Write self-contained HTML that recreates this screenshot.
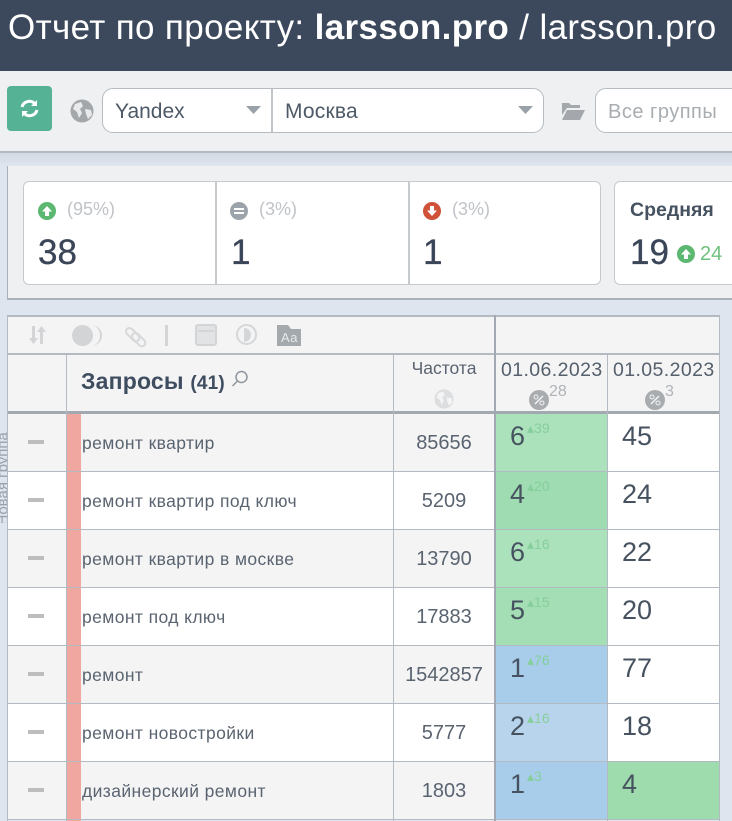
<!DOCTYPE html>
<html lang="ru"><head><meta charset="utf-8"><style>
html,body{margin:0;padding:0}
body{width:732px;height:821px;position:relative;overflow:hidden;background:#dfe5ef;font-family:"Liberation Sans","Noto Sans CJK SC",sans-serif;color:#3d4a5c}
div,span.a,svg{position:absolute}
.t{white-space:nowrap;line-height:1}
.b{background:#b3bac1}
.q{font-size:17.5px;color:#5a6470;left:82px;letter-spacing:.4px}
.f{font-size:20px;color:#5a6470;left:394px;width:100px;text-align:center}
.n{font-size:27px;color:#46525f}
.s{font-size:14px;color:#86cf9c}
.m{left:28px;width:16px;height:4px;background:#bdbdbd}
.big{-webkit-text-stroke:.35px #3a4658}
</style></head><body>
<div style="left:0;top:0;width:732px;height:71px;background:#3c495c"></div>
<div class="t" style="left:8px;top:10px;font-size:35px;color:#fff;letter-spacing:.36px">Отчет по проекту: <b>larsson.pro</b> / larsson.pro</div>

<div style="left:0;top:71px;width:732px;height:80px;background:#eef0f2;border-bottom:2px solid #b4bac2"></div>
<div style="left:7px;top:86px;width:45px;height:45px;border-radius:4px;background:#56b294"></div>
<svg style="left:19px;top:98px" width="21" height="21" viewBox="0 0 21 21" fill="none" stroke="#fff" stroke-width="3"><path d="M3 9a7.500 7.500 0 0 1 13-3"/><path d="M18 12a7.500 7.500 0 0 1-13 3"/><path d="M18 2v6h-6z" fill="#fff" stroke="none"/><path d="M3 19v-6h6z" fill="#fff" stroke="none"/></svg>
<svg style="left:70px;top:99px" width="24" height="24" viewBox="0 0 24 24"><circle cx="12" cy="12" r="11.500" fill="#a3a7aa"/><path d="M5 5l6-2 2 4-3 3 2 4-3 5-2-6-4-3zM15 10l6 1 1 5-4 4-2-5z" fill="#e8eaec"/></svg>
<div style="left:102px;top:88px;width:440px;height:43px;background:#fff;border:1.500px solid #b6bcc2;border-radius:11px"></div>
<div style="left:271px;top:89px;width:2px;height:43px;background:#c0c5ca"></div>
<div class="t" style="left:115px;top:101px;font-size:21px;color:#4d5966">Yandex</div>
<div class="t" style="left:285px;top:101px;font-size:21px;color:#4d5966;letter-spacing:.2px">Москва</div>
<svg style="left:246px;top:106px" width="15" height="9"><path d="M0 0h15l-7.500 8z" fill="#9aa1a8"/></svg>
<svg style="left:518px;top:106px" width="15" height="9"><path d="M0 0h15l-7.500 8z" fill="#9aa1a8"/></svg>
<svg style="left:561px;top:101px" width="25" height="20" viewBox="0 0 25 20"><path d="M1 2h7l2 2h9v3H6L1 14zM1 19l5-10h18l-5 10z" fill="#a4a8ac"/></svg>
<div style="left:595px;top:88px;width:160px;height:43px;background:#fff;border:1.500px solid #b6bcc2;border-radius:11px"></div>
<div class="t" style="left:608px;top:102px;font-size:20px;color:#a8adb2;letter-spacing:.5px">Все группы</div>

<div style="left:0;top:153px;width:732px;height:13px;background:linear-gradient(#d3dae5,#dfe5ef)"></div>
<div style="left:7px;top:166px;width:725px;background:#eef0f2;border-left:1.500px solid #a9b0ba;border-bottom:2px solid #aab1bb;box-sizing:border-box;height:134px"></div>
<div style="left:23px;top:181px;width:576px;height:102px;background:#fff;border:1.500px solid #c6cacd;border-radius:6px"></div>
<div style="left:215px;top:181px;width:1.500px;height:104px;background:#c6cacd"></div>
<div style="left:408px;top:181px;width:1.500px;height:104px;background:#c6cacd"></div>
<div style="left:614px;top:181px;width:140px;height:102px;background:#fff;border:1.500px solid #c6cacd;border-radius:6px"></div>

<svg style="left:38px;top:202px" width="18" height="18" viewBox="0 0 18 18"><circle cx="9" cy="9" r="9" fill="#5cb870"/><path d="M9 4l5 5.500h-3V14H7V9.500H4z" fill="#fff"/></svg>
<div class="t" style="left:67px;top:200px;font-size:18px;color:#c0c3c7">(95%)</div>
<div class="t big" style="left:38px;top:235px;font-size:35px;color:#3a4658">38</div>
<svg style="left:230px;top:202px" width="18" height="18" viewBox="0 0 18 18"><circle cx="9" cy="9" r="9" fill="#9da3aa"/><path d="M4 6h10v2H4zM4 10h10v2H4z" fill="#fff"/></svg>
<div class="t" style="left:259px;top:200px;font-size:18px;color:#c0c3c7">(3%)</div>
<div class="t big" style="left:231px;top:235px;font-size:35px;color:#3a4658">1</div>
<svg style="left:423px;top:202px" width="18" height="18" viewBox="0 0 18 18"><circle cx="9" cy="9" r="9" fill="#cf5239"/><path d="M9 14L4 8.500h3V4h4v4.500h3z" fill="#fff"/></svg>
<div class="t" style="left:452px;top:200px;font-size:18px;color:#c0c3c7">(3%)</div>
<div class="t big" style="left:423px;top:235px;font-size:35px;color:#3a4658">1</div>
<div class="t" style="left:630px;top:201px;font-size:19.500px;font-weight:bold;color:#46525f">Средняя</div>
<div class="t big" style="left:630px;top:235px;font-size:35px;color:#3a4658">19</div>
<svg style="left:677px;top:245px" width="18" height="18" viewBox="0 0 18 18"><circle cx="9" cy="9" r="9" fill="#5cb870"/><path d="M9 4l5 5.500h-3V14H7V9.500H4z" fill="#fff"/></svg>
<div class="t" style="left:700px;top:244px;font-size:20px;color:#6fc07f">24</div>

<div style="left:8px;top:316px;width:711px;height:503px;background:#f4f4f5"></div>
<div style="left:8px;top:471px;width:711px;height:58px;background:#fff"></div>
<div style="left:8px;top:587px;width:711px;height:58px;background:#fff"></div>
<div style="left:8px;top:703px;width:711px;height:58px;background:#fff"></div>
<div style="left:607px;top:413px;width:112px;height:348px;background:#fff"></div>
<div style="left:494px;top:413px;width:113px;height:58px;background:#abe2bb"></div>
<div style="left:494px;top:471px;width:113px;height:58px;background:#9fdcb1"></div>
<div style="left:494px;top:529px;width:113px;height:58px;background:#abe2bb"></div>
<div style="left:494px;top:587px;width:113px;height:58px;background:#a3deb4"></div>
<div style="left:494px;top:645px;width:113px;height:58px;background:#a7cdea"></div>
<div style="left:494px;top:703px;width:113px;height:58px;background:#b8d4ec"></div>
<div style="left:494px;top:761px;width:113px;height:58px;background:#a7cdea"></div>
<div style="left:607px;top:761px;width:112px;height:58px;background:#9fdcad"></div>
<div style="left:66px;top:413px;width:15px;height:408px;background:#f0a7a0"></div>

<div class="b" style="left:8px;top:315px;width:711px;height:1.500px"></div>
<div class="b" style="left:8px;top:353px;width:711px;height:1.500px"></div>
<div style="left:8px;top:411px;width:711px;height:2.500px;background:#a2a9b1"></div>
<div class="b" style="left:8px;top:471px;width:711px;height:1px"></div>
<div class="b" style="left:8px;top:529px;width:711px;height:1px"></div>
<div class="b" style="left:8px;top:587px;width:711px;height:1px"></div>
<div class="b" style="left:8px;top:645px;width:711px;height:1px"></div>
<div class="b" style="left:8px;top:703px;width:711px;height:1px"></div>
<div class="b" style="left:8px;top:761px;width:711px;height:1px"></div>
<div class="b" style="left:8px;top:819px;width:711px;height:1px"></div>
<div class="b" style="left:7px;top:315px;width:1px;height:506px"></div>
<div class="b" style="left:66px;top:354px;width:1px;height:467px"></div>
<div class="b" style="left:393px;top:354px;width:1px;height:467px"></div>
<div style="left:494px;top:315px;width:2px;height:506px;background:#a2a9b2"></div>
<div class="b" style="left:607px;top:354px;width:1px;height:467px"></div>
<div class="b" style="left:719px;top:315px;width:1px;height:506px"></div>

<svg style="left:27px;top:325px" width="22" height="20" viewBox="0 0 22 20" fill="#d2d4d6"><path d="M5 1h3v12h3l-4.500 6L2 13h3zM13 19h3V7h3l-4.500-6L10 7h3z"/></svg>
<div style="left:72px;top:325px;width:21px;height:21px;border-radius:50%;background:#d2d4d6"></div>
<svg style="left:90px;top:325px" width="12" height="21"><path d="M1 0a11 10.500 0 0 1 0 21a9 10.500 0 0 0 0-21z" fill="#d2d4d6"/></svg>
<svg style="left:122px;top:323px" width="26" height="25" viewBox="0 0 26 25" fill="none" stroke="#d6d8da" stroke-width="2"><rect x="0" y="-3.500" width="16" height="7" rx="3.500" transform="translate(5 6) rotate(45)"/><rect x="0" y="-3.500" width="16" height="7" rx="3.500" transform="translate(11 11) rotate(45)"/></svg>
<div style="left:165px;top:325px;width:3px;height:21px;background:#d2d4d6"></div>
<div style="left:195px;top:324px;width:18px;height:18px;border:2.500px solid #d2d4d6;border-radius:3px;background:#e2e3e5"></div>
<div style="left:198px;top:330px;width:16px;height:2px;background:#d2d4d6"></div>
<div style="left:236px;top:324px;width:17px;height:17px;border:2.500px solid #d4d6d8;border-radius:50%"></div>
<div style="left:244px;top:328px;width:7px;height:14px;border-radius:0 7px 7px 0;background:#d4d6d8"></div>
<svg style="left:277px;top:325px" width="24" height="21"><path d="M0 0h11l3 4h10v17H0z" fill="#a3a9ac"/></svg>
<div class="t" style="left:281px;top:331px;font-size:13px;color:#e8eaeb;letter-spacing:.6px">Aa</div>

<div class="t" style="left:81px;top:370px;font-size:23px;font-weight:bold;color:#3f4d60;letter-spacing:.2px">Запросы <span style="font-size:19px">(41)</span></div>
<svg style="left:231px;top:370px" width="18" height="18" viewBox="0 0 18 18" fill="none" stroke="#8e959c" stroke-width="1.500"><circle cx="10.500" cy="7" r="5.500"/><path d="M6.500 11L1.500 16"/></svg>
<div class="t" style="left:394px;top:360px;width:100px;text-align:center;font-size:17.500px;color:#5a6470">Частота</div>
<svg style="left:434px;top:389px" width="20" height="20" viewBox="0 0 24 24"><circle cx="12" cy="12" r="11.500" fill="#dcdedf"/><path d="M5 5l6-2 2 4-3 3 2 4-3 5-2-6-4-3zM15 10l6 1 1 5-4 4-2-5z" fill="#f4f4f5"/></svg>
<div class="t" style="left:501px;top:361px;font-size:19.500px;color:#55606c;letter-spacing:.4px">01.06.2023</div>
<div class="t" style="left:613px;top:361px;font-size:19.500px;color:#55606c;letter-spacing:.4px">01.05.2023</div>
<svg style="left:529px;top:390px" width="20" height="20"><circle cx="10" cy="10" r="10" fill="#a9acaf"/><path d="M6 14l8-8" stroke="#f4f4f5" stroke-width="1.500"/><circle cx="7" cy="7" r="2" fill="none" stroke="#f4f4f5"/><circle cx="13" cy="13" r="2" fill="none" stroke="#f4f4f5"/></svg>
<div class="t" style="left:549px;top:384px;font-size:16px;color:#b0b3b7">28</div>
<svg style="left:645px;top:390px" width="20" height="20"><circle cx="10" cy="10" r="10" fill="#a9acaf"/><path d="M6 14l8-8" stroke="#f4f4f5" stroke-width="1.500"/><circle cx="7" cy="7" r="2" fill="none" stroke="#f4f4f5"/><circle cx="13" cy="13" r="2" fill="none" stroke="#f4f4f5"/></svg>
<div class="t" style="left:665px;top:384px;font-size:16px;color:#b0b3b7">3</div>

<div class="m" style="top:440px"></div><div class="m" style="top:498px"></div><div class="m" style="top:556px"></div><div class="m" style="top:614px"></div><div class="m" style="top:672px"></div><div class="m" style="top:730px"></div><div class="m" style="top:788px"></div>

<div class="t q" style="top:435px">ремонт квартир</div>
<div class="t q" style="top:493px">ремонт квартир под ключ</div>
<div class="t q" style="top:551px">ремонт квартир в москве</div>
<div class="t q" style="top:609px">ремонт под ключ</div>
<div class="t q" style="top:667px">ремонт</div>
<div class="t q" style="top:725px">ремонт новостройки</div>
<div class="t q" style="top:783px">дизайнерский ремонт</div>

<div class="t f" style="top:433px">85656</div>
<div class="t f" style="top:491px">5209</div>
<div class="t f" style="top:549px">13790</div>
<div class="t f" style="top:607px">17883</div>
<div class="t f" style="top:665px">1542857</div>
<div class="t f" style="top:723px">5777</div>
<div class="t f" style="top:781px">1803</div>

<div class="t n" style="left:510px;top:423px">6</div><div class="t s" style="left:527px;top:421px">▴39</div><div class="t n" style="left:622px;top:423px">45</div>
<div class="t n" style="left:510px;top:481px">4</div><div class="t s" style="left:527px;top:479px">▴20</div><div class="t n" style="left:622px;top:481px">24</div>
<div class="t n" style="left:510px;top:539px">6</div><div class="t s" style="left:527px;top:537px">▴16</div><div class="t n" style="left:622px;top:539px">22</div>
<div class="t n" style="left:510px;top:597px">5</div><div class="t s" style="left:527px;top:595px">▴15</div><div class="t n" style="left:622px;top:597px">20</div>
<div class="t n" style="left:510px;top:655px">1</div><div class="t s" style="left:527px;top:653px">▴76</div><div class="t n" style="left:622px;top:655px">77</div>
<div class="t n" style="left:510px;top:713px">2</div><div class="t s" style="left:527px;top:711px">▴16</div><div class="t n" style="left:622px;top:713px">18</div>
<div class="t n" style="left:510px;top:771px">1</div><div class="t s" style="left:527px;top:769px">▴3</div><div class="t n" style="left:622px;top:771px">4</div>

<div style="left:0;top:413px;width:7px;height:110px;overflow:hidden"><div class="t" style="left:-57px;top:45px;width:120px;text-align:left;font-size:15px;color:#9aa1a9;transform:rotate(-90deg)">Новая группа</div></div>
</body></html>
